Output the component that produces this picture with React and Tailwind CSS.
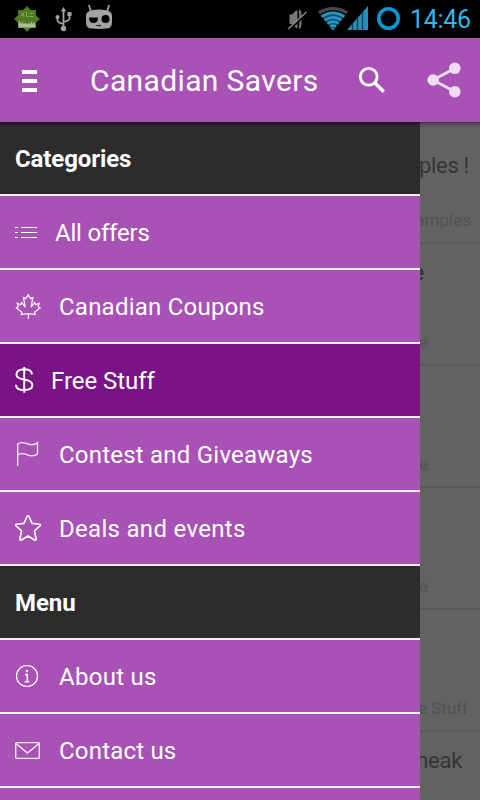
const categories = [
  { label: 'All offers', icon: ListIcon, spacing: 'pl-[55px] tracking-[-0.2px]' },
  { label: 'Canadian Coupons', icon: LeafIcon, spacing: 'pl-[59px] tracking-[0.23px]' },
  { label: 'Free Stuff', icon: DollarIcon, spacing: 'pl-[51px] tracking-[-0.05px]', active: true },
  { label: 'Contest and Giveaways', icon: FlagIcon, spacing: 'pl-[59px] tracking-[0.22px]' },
  { label: 'Deals and events', icon: StarIcon, spacing: 'pl-[59px] tracking-[0.3px]' },
];

const menu = [
  { label: 'About us', icon: InfoIcon, spacing: 'pl-[59px] tracking-[0.27px]' },
  { label: 'Contact us', icon: MailIcon, spacing: 'pl-[59px] tracking-[0.2px]' },
];

function ListIcon() {
  return (
    <svg className="block h-7 w-7" viewBox="0 0 28 28" stroke="#fff" fill="none">
      <path d="M0 8.5h3M6 8.5h16M0 13.5h3M6 13.5h16M0 18.5h3M6 18.5h16" />
    </svg>
  );
}

function LeafIcon() {
  return (
    <svg className="block h-7 w-7" viewBox="0 0 28 28" stroke="#fff" strokeOpacity=".9" fill="none" strokeWidth="1.3">
      <path d="M13.2 1.8L10.8 5.7 8.5 4.6 10.3 14 6.8 9.5 5.7 11.6 2.2 10.4 3.3 13.600 1.3 14.800 6.800 19.300 6.300 21.500 13.200 20.600 20.100 21.500 19.600 19.300 25.100 14.800 23.100 13.600 24.200 10.400 20.700 11.600 19.600 9.500 16.100 14 17.900 4.600 15.600 5.700z" />
      <path d="M13.400 20.500V26" />
    </svg>
  );
}

function DollarIcon() {
  return (
    <svg className="block h-7 w-7" viewBox="0 0 28 28" stroke="#fff" fill="none" strokeWidth="1.900">
      <path d="M9.200 0v25.800M17 7.300C16.700 4 14 2.300 9.200 2.300c-4.900 0-7.800 1.900-7.800 5.100 0 3.200 2.800 4.200 7.800 5.100 5.300 1 8.200 2.300 8.200 5.600 0 3.300-3.200 5-8.200 5-5.200 0-8.100-1.900-8.300-5.300" />
    </svg>
  );
}

function FlagIcon() {
  return (
    <svg className="block h-7 w-7" viewBox="0 0 28 28" stroke="#fff" strokeOpacity=".9" fill="none" strokeWidth="1.300">
      <path d="M2.700 25V3C4 1.900 6.500 1.300 9 1.900c3 .7 5 2 8 1.800 2.400-.1 4.300-.700 5.500-1.900V13c-1.500 1.300-3.300 1.800-5.500 1.800-3 0-5-1.500-8-2-2.500-.4-5 .1-6.300 1.300" />
    </svg>
  );
}

function StarIcon() {
  return (
    <svg className="block h-7 w-7" viewBox="0 0 28 28" stroke="#fff" fill="none" strokeWidth="1.600" strokeLinejoin="round">
      <path d="M12 1.500q1-1.500 2 0l3 6.900 7.400.8q1.600.4.600 1.600l-5.500 5 1.600 8.100q0 1.700-1.500 1.100L13 21l-6.600 4q-1.500.6-1.500-1.100l1.600-8.100-5.500-5q-1-1.200.6-1.600l7.400-.8z" />
    </svg>
  );
}

function InfoIcon() {
  return (
    <svg className="block h-7 w-7" viewBox="0 0 28 28" fill="none" stroke="#fff">
      <circle cx="12" cy="13" r="10.500" strokeWidth="1.200" />
      <circle cx="12" cy="8" r="1.300" fill="#fff" stroke="none" />
      <path d="M10 11.500h2.300v7.200M9.700 18.700h4.600" strokeWidth="1.500" />
    </svg>
  );
}

function MailIcon() {
  return (
    <svg className="block h-7 w-7" viewBox="0 0 28 28" fill="none" stroke="#fff" strokeOpacity=".9" strokeWidth="1.400">
      <rect x=".7" y="5.600" width="23.600" height="15.800" rx="1" />
      <path d="M1 6.500l11.500 9.500L24 6.500" />
    </svg>
  );
}

function StatusBar() {
  return (
    <div className="flex h-[38px] bg-black">
      <svg className="block h-[38px] w-[120px]" viewBox="0 0 120 38">
        <path d="M27 6l3.800 4H36v5.200l4 3.800-4 3.800V28h-5.200L27 32l-3.800-4H18v-5.200L14 19l4-3.800V10h5.200z" fill="#4d7a1c" />
        <path d="M18.500 27.500v-5l.8-2.500 1 3 1.200 1 1-3 1.200 3.500 1.800-2 1.500 2 1.500-2 1.500 2 1.500-3.500 1.200 3 1.500-2 .8 2 .5 3.500z" fill="#aebc9d" />
        <path d="M21.500 12.500l3 4m0-4l-4 4M26.500 11.500v5h2M29.500 13.500h3.500M29.500 16.500h3.500" stroke="#8daa6d" fill="none" />
        <g stroke="#a3a3a3" strokeWidth="1.800" fill="none">
          <path d="M63.500 10v18M57.500 17v3.500q0 2 6 3.500M69.500 15v3.500q0 2-6 3.500" />
        </g>
        <g fill="#a3a3a3">
          <path d="M63.500 7l2.700 4.500h-5.400zM67.500 12h4v4h-4z" />
          <circle cx="57.500" cy="17" r="2" />
          <circle cx="63.500" cy="28.500" r="2.700" />
        </g>
        <path d="M88.800 5l2.200 6.500M109.200 5l-2.200 6.500" stroke="#a3a3a3" strokeWidth="1.700" />
        <path d="M92 10.200Q99 8.700 106 10.200q6 1.300 6 5.300v6.500q0 6-5 6.600-8 .9-16 0-5-.6-5-6.600v-6.500q0-4 6-5.300z" fill="#a3a3a3" />
        <path d="M89 17.500h9q0 5.500-4.500 5.500T89 17.500z" fill="#000" />
        <circle cx="105.500" cy="19" r="4" fill="#000" />
        <path d="M96.500 25.300q2 .8 4.500.3" stroke="#000" fill="none" />
      </svg>
      <svg className="ml-auto block h-[38px] w-[130px]" viewBox="280 0 130 38">
        <path d="M289.500 14.500h2.500l4-4q1.500-1 1.500 1.500v14.500q0 2.500-1.500 1.500l-4-4h-2.500z" fill="#777" />
        <path d="M299 10.500q1.500 0 1.500 8.500t-1.500 9" stroke="#777" strokeWidth="2.400" fill="none" />
        <path d="M289 30.500l18-17.500" stroke="#000" strokeWidth="2" />
        <path d="M288 29l18.500-17" stroke="#888" strokeWidth="1.400" />
        <path d="M333 30l-12-14.500q12-7.500 24 0z" fill="#154a61" />
        <path d="M318.800 12.800q14.200-8.500 28.400 0" stroke="#484848" strokeWidth="3.200" fill="none" />
        <path d="M321.500 16.700q11.500-7.600 23 0M324.500 20.200q8.500-5.600 17 0M327.300 23.500q5.700-3.800 11.400 0M330 26.600q3-2 6 0" stroke="#2794c2" strokeWidth="2.600" fill="none" />
        <path d="M331 28h4l-2 2.500z" fill="#2794c2" />
        <path d="M347 30L368 6v24z" fill="#2b8db7" />
        <path d="M352.500 24v6M357.500 18v12M362.500 12v18" stroke="#134158" strokeWidth="1.300" />
        <circle cx="388.500" cy="18.500" r="9.700" stroke="#0599d3" strokeWidth="3.600" fill="none" />
      </svg>
      <span className="w-[70px] text-[25px] leading-[39px] tracking-[-0.3px] text-[#33b5e5]">14:46</span>
    </div>
  );
}

function ActionBar() {
  return (
    <header className="flex h-[84px] items-center bg-[#a852b5]">
      <div className="ml-[22px] mt-[2px] flex w-[15px] flex-col gap-[5px]">
        <i className="h-1 bg-white" />
        <i className="h-1 bg-white" />
        <i className="h-1 bg-white" />
      </div>
      <h1 className="ml-[53px] whitespace-nowrap pt-px text-[30px] leading-[84px] tracking-[0.37px] text-white">Canadian Savers</h1>
      <svg className="ml-auto block h-[84px] w-[130px] shrink-0" viewBox="350 38 130 84">
        <circle cx="368.700" cy="76.700" r="8.400" stroke="#fff" strokeWidth="2.800" fill="none" />
        <path d="M374.500 82.500l9.300 9.300" stroke="#fff" strokeWidth="3.400" />
        <g fill="#eedcf1">
          <path d="M454.500 68.500L433 80l21.500 11.500" stroke="#eedcf1" strokeWidth="2.800" fill="none" />
          <circle cx="454.800" cy="68.300" r="5.800" />
          <circle cx="433.200" cy="80" r="5.800" />
          <circle cx="454.800" cy="91.700" r="5.800" />
        </g>
      </svg>
    </header>
  );
}

function SectionTitle({ children }) {
  return (
    <h2 className="h-[74px] border-b-2 border-[#f5f1ee] bg-[#2c2c2c] pl-[15px] text-[24px] font-bold leading-[75px] tracking-[-0.1px] text-white">
      {children}
    </h2>
  );
}

function DrawerItem({ item }) {
  const Icon = item.icon;
  return (
    <div className={`relative h-[74px] border-b-2 border-[#f5f1ee] text-[24px] leading-[74px] text-white ${item.spacing} ${item.active ? 'bg-[#7a1486]' : 'bg-[#a852b5]'}`}>
      <div className="absolute left-[15px] top-[23px]">
        <Icon />
      </div>
      {item.label}
    </div>
  );
}

// Part of the offers list that stays visible beside the open drawer
function OfferStrip() {
  const offers = [
    { title: 'ples !', tag: 'amples', titleEnd: 'pr-[11px]', tagEnd: 'pr-[9px]' },
    { title: 'e', tag: 'e', titleEnd: 'pr-[56px] font-medium', tagEnd: 'pr-[52px]' },
    { title: '', tag: 'e', titleEnd: '', tagEnd: 'pr-[52px]' },
    { title: '', tag: 'e', titleEnd: '', tagEnd: 'pr-[52px]' },
    { title: '', tag: 'e Stuff', titleEnd: '', tagEnd: 'pr-[12px]' },
    { title: 'neak', tag: '', titleEnd: 'pr-[18px]', tagEnd: '' },
  ];
  return (
    <div className="w-[60px] shrink-0 overflow-hidden bg-[#626262]">
      {offers.map((offer, i) => (
        <div key={i} className={`flex h-[122px] flex-col items-end whitespace-nowrap border-b-2 border-[#595959] ${i === 0 ? 'pt-[28px]' : 'pt-[13px]'}`}>
          <p className={`h-8 text-[22px] leading-8 tracking-[-0.3px] text-[#353535] ${offer.titleEnd}`}>{offer.title}</p>
          <p className={`mt-auto mb-[10px] text-[17px] leading-6 text-[#515154] ${offer.tagEnd}`}>{offer.tag}</p>
        </div>
      ))}
    </div>
  );
}

export default function App() {
  return (
    <div className="flex h-[800px] w-[480px] flex-col overflow-hidden bg-[#626262] font-['Roboto',sans-serif]">
      <StatusBar />
      <ActionBar />
      <main className="relative flex min-h-0 flex-1 overflow-hidden">
        <nav className="w-[420px] shrink-0">
          <SectionTitle>Categories</SectionTitle>
          {categories.map((item) => (
            <DrawerItem key={item.label} item={item} />
          ))}
          <SectionTitle>Menu</SectionTitle>
          {menu.map((item) => (
            <DrawerItem key={item.label} item={item} />
          ))}
          <div className="h-3 bg-[#a852b5]" />
        </nav>
        <OfferStrip />
        <div className="absolute inset-x-0 top-0 h-[6px] border-t border-black/40 bg-gradient-to-b from-black/25 to-transparent" />
      </main>
    </div>
  );
}
